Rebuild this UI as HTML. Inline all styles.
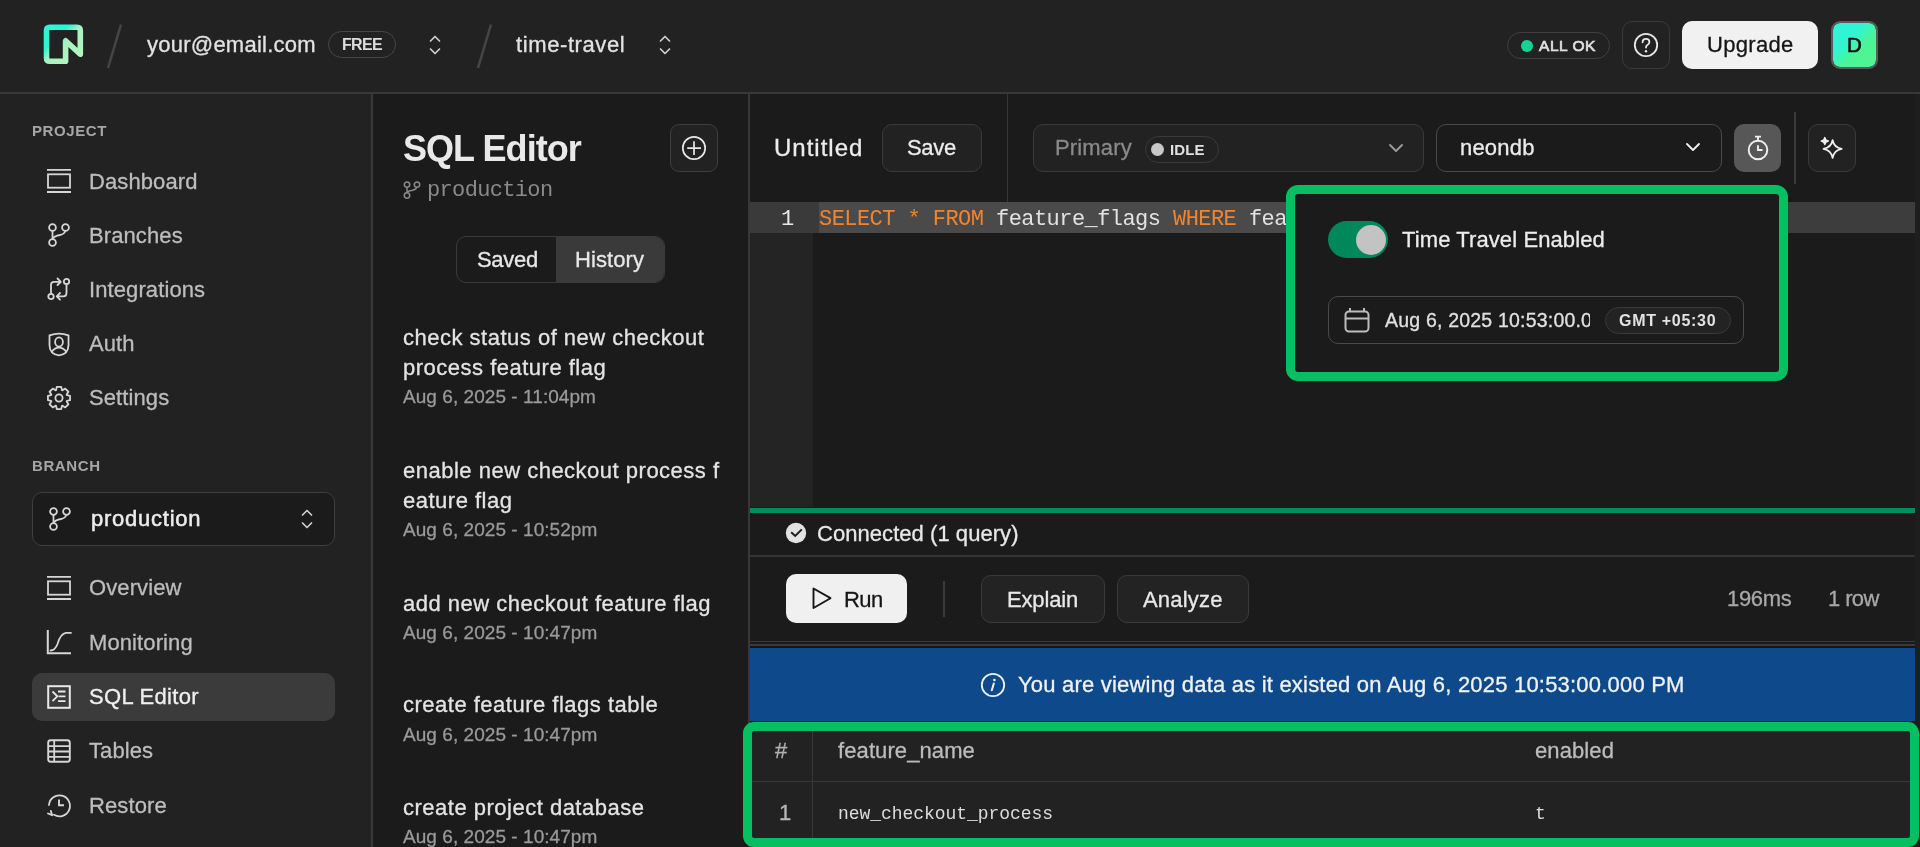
<!DOCTYPE html>
<html><head><meta charset="utf-8"><title>SQL Editor</title>
<style>
html,body{margin:0;padding:0;-webkit-font-smoothing:antialiased;width:1920px;height:847px;overflow:hidden;background:#1b1b1b;}
.t{position:absolute;white-space:pre;will-change:transform;font-family:'Liberation Sans', sans-serif;}
.b{position:absolute;}
svg.b{overflow:visible}
</style></head><body>
<div class="b" style="left:0px;top:0px;width:1920px;height:847px;background:#1b1b1b;border-radius:0px;"></div>
<div class="b" style="left:0px;top:0px;width:1920px;height:92px;background:#222222;border-radius:0px;"></div>
<div class="b" style="left:0px;top:92px;width:1920px;height:2px;background:#383838;border-radius:0px;"></div>
<div class="b" style="left:0px;top:94px;width:371px;height:753px;background:#222222;border-radius:0px;"></div>
<div class="b" style="left:371px;top:94px;width:2px;height:753px;background:#383838;border-radius:0px;"></div>
<div class="b" style="left:748px;top:94px;width:2px;height:753px;background:#383838;border-radius:0px;"></div>
<svg class="b" style="left:40px;top:20px;" width="48" height="48" viewBox="0 0 48 48" fill="none"><defs><linearGradient id="lg" gradientUnits="userSpaceOnUse" x1="4" y1="4" x2="43" y2="44"><stop offset="0" stop-color="#2cf5d8"/><stop offset="0.33" stop-color="#30f3d2"/><stop offset="0.5" stop-color="#a6f4c2"/><stop offset="1" stop-color="#b6f6bd"/></linearGradient></defs>
<path d="M25.6 41.3 H9.8 Q6.5 41.3 6.5 38 V10.5 Q6.5 7.2 9.8 7.2 H37 Q40.3 7.2 40.3 10.5 V34.3 L25.6 20.8 V41.3 Z" stroke="url(#lg)" stroke-width="5.6" stroke-linejoin="round" stroke-linecap="round"/></svg>
<svg class="b" style="left:100px;top:20px;" width="30" height="52" viewBox="0 0 30 52" fill="none"><line x1="21" y1="4.5" x2="8" y2="48" stroke="#454545" stroke-width="2.6"/></svg>
<div class="t" style="left:147px;top:33.87px;font-size:22px;line-height:22px;color:#e2e2e2;font-weight:normal;font-family:'Liberation Sans', sans-serif;letter-spacing:0.25px;-webkit-text-stroke:0.3px #e2e2e2;">your@email.com</div>
<div class="b" style="left:328px;top:31px;width:68px;height:27px;background:transparent;border:1.5px solid #474747;box-sizing:border-box;border-radius:14px;"></div>
<div class="t" style="left:342px;top:37.45px;font-size:16px;line-height:16px;color:#dddddd;font-weight:bold;font-family:'Liberation Sans', sans-serif;letter-spacing:-0.7px;">FREE</div>
<svg class="b" style="left:428px;top:34px;" width="14" height="22" viewBox="0 0 14 22" fill="none"><path d="M2.5 7 L7 2.5 L11.5 7 M2.5 15 L7 19.5 L11.5 15" stroke="#cfcfcf" stroke-width="1.7" stroke-linecap="round" stroke-linejoin="round"/></svg>
<svg class="b" style="left:470px;top:20px;" width="30" height="52" viewBox="0 0 30 52" fill="none"><line x1="21" y1="4.5" x2="8" y2="48" stroke="#454545" stroke-width="2.6"/></svg>
<div class="t" style="left:515.5px;top:33.87px;font-size:22px;line-height:22px;color:#e2e2e2;font-weight:normal;font-family:'Liberation Sans', sans-serif;letter-spacing:0.6px;-webkit-text-stroke:0.3px #e2e2e2;">time-travel</div>
<svg class="b" style="left:658px;top:34px;" width="14" height="22" viewBox="0 0 14 22" fill="none"><path d="M2.5 7 L7 2.5 L11.5 7 M2.5 15 L7 19.5 L11.5 15" stroke="#cfcfcf" stroke-width="1.7" stroke-linecap="round" stroke-linejoin="round"/></svg>
<div class="b" style="left:1507px;top:32px;width:103px;height:27px;background:#222;border:1.8px solid #404040;box-sizing:border-box;border-radius:14px;"></div>
<div class="b" style="left:1520.5px;top:39.5px;width:12.5px;height:12.5px;background:#12d394;border-radius:7px;"></div>
<div class="t" style="left:1539px;top:37.58px;font-size:15.5px;line-height:15.5px;color:#e0e0e0;font-weight:normal;font-family:'Liberation Sans', sans-serif;letter-spacing:0.55px;-webkit-text-stroke:0.7px #e0e0e0;">ALL OK</div>
<div class="b" style="left:1622px;top:20.5px;width:48px;height:48.0px;background:#222;border:1.5px solid #3a3a3a;box-sizing:border-box;border-radius:10px;"></div>
<svg class="b" style="left:1632px;top:30.5px;" width="28" height="28" viewBox="0 0 28 28" fill="none"><circle cx="14" cy="14" r="11.2" stroke="#e8e8e8" stroke-width="1.8"/><path d="M10.6 11.3 Q10.6 7.8 14 7.8 Q17.4 7.8 17.4 11 Q17.4 13 15.4 14 Q14 14.7 14 16.5" stroke="#e8e8e8" stroke-width="1.8" stroke-linecap="round" fill="none"/><circle cx="14" cy="20.3" r="1.2" fill="#e8e8e8"/></svg>
<div class="b" style="left:1682px;top:20.5px;width:136px;height:48.0px;background:#f1f1f1;border-radius:10px;"></div>
<div class="t" style="left:1707px;top:33.87px;font-size:22px;line-height:22px;color:#151515;font-weight:normal;font-family:'Liberation Sans', sans-serif;letter-spacing:0.3px;-webkit-text-stroke:0.3px #151515;">Upgrade</div>
<div class="b" style="left:1831px;top:21px;width:47px;height:47.5px;background:linear-gradient(135deg,#2ef5d8 0%,#31f5d0 38%,#4cf595 62%,#4ff590 100%);border:2px solid #5e5a5a;box-sizing:border-box;border-radius:9px;background-clip:padding-box;"></div>
<div class="t" style="left:1847.2px;top:35.44px;font-size:20.5px;line-height:20.5px;color:#111111;font-weight:normal;font-family:'Liberation Sans', sans-serif;letter-spacing:0px;-webkit-text-stroke:0.6px #111111;">D</div>
<div class="t" style="left:32px;top:123.00px;font-size:15px;line-height:15px;color:#a6a6a6;font-weight:bold;font-family:'Liberation Sans', sans-serif;letter-spacing:0.6px;">PROJECT</div>
<div class="t" style="left:32px;top:458.40px;font-size:15px;line-height:15px;color:#a6a6a6;font-weight:bold;font-family:'Liberation Sans', sans-serif;letter-spacing:0.6px;">BRANCH</div>
<svg class="b" style="left:46px;top:168px;" width="26" height="26" viewBox="0 0 26 26" fill="none"><path d="M1 1.9 H25 M1 24 H25" stroke="#d6d6d6" stroke-width="1.8"/><rect x="2" y="6.3" width="22" height="13.4" stroke="#d6d6d6" stroke-width="1.8"/></svg>
<div class="t" style="left:89px;top:170.87px;font-size:22px;line-height:22px;color:#bdbdbd;font-weight:normal;font-family:'Liberation Sans', sans-serif;letter-spacing:0.1px;-webkit-text-stroke:0.3px #bdbdbd;">Dashboard</div>
<svg class="b" style="left:46px;top:222px;" width="26" height="26" viewBox="0 0 26 26" fill="none"><g transform="scale(1.0)"><circle cx="6.5" cy="5.5" r="3.4" stroke="#d6d6d6" stroke-width="1.8"/><circle cx="19.5" cy="5.5" r="3.4" stroke="#d6d6d6" stroke-width="1.8"/><circle cx="6.5" cy="20.5" r="3.4" stroke="#d6d6d6" stroke-width="1.8"/><path d="M6.5 8.9 V17.1 M19.3 8.9 Q18.5 12 14 13 Q8 14 6.5 17" stroke="#d6d6d6" stroke-width="1.8" fill="none"/></g></svg>
<div class="t" style="left:89px;top:224.87px;font-size:22px;line-height:22px;color:#bdbdbd;font-weight:normal;font-family:'Liberation Sans', sans-serif;letter-spacing:0.1px;-webkit-text-stroke:0.3px #bdbdbd;">Branches</div>
<svg class="b" style="left:46px;top:276px;" width="26" height="26" viewBox="0 0 26 26" fill="none"><circle cx="5" cy="20.5" r="2.7" stroke="#d6d6d6" stroke-width="1.8"/><circle cx="20.5" cy="5.5" r="2.7" stroke="#d6d6d6" stroke-width="1.8"/><path d="M5 17.8 V9 Q5 5.8 8 5.8 H14.5 M11.5 2.5 L14.8 5.8 L11.5 9" stroke="#d6d6d6" stroke-width="1.8" fill="none" stroke-linecap="round" stroke-linejoin="round"/><path d="M20.5 8.2 V17 Q20.5 20.3 17.5 20.3 H11 M14 17 L10.7 20.3 L14 23.6" stroke="#d6d6d6" stroke-width="1.8" fill="none" stroke-linecap="round" stroke-linejoin="round"/></svg>
<div class="t" style="left:89px;top:278.87px;font-size:22px;line-height:22px;color:#bdbdbd;font-weight:normal;font-family:'Liberation Sans', sans-serif;letter-spacing:0.1px;-webkit-text-stroke:0.3px #bdbdbd;">Integrations</div>
<svg class="b" style="left:46px;top:330.5px;" width="26" height="26" viewBox="0 0 26 26" fill="none"><path d="M3.5 4.3 Q13 1 22.5 4.3 V14 Q22.5 23.3 13 24.3 Q3.5 23.3 3.5 14 Z" stroke="#d6d6d6" stroke-width="1.8" stroke-linejoin="round"/><ellipse cx="13" cy="11" rx="3.9" ry="4.6" stroke="#d6d6d6" stroke-width="1.8"/><path d="M5.8 20.6 Q8.8 16.6 13 16.6 Q17.2 16.6 20.2 20.6" stroke="#d6d6d6" stroke-width="1.8" fill="none"/></svg>
<div class="t" style="left:89px;top:333.37px;font-size:22px;line-height:22px;color:#bdbdbd;font-weight:normal;font-family:'Liberation Sans', sans-serif;letter-spacing:0.1px;-webkit-text-stroke:0.3px #bdbdbd;">Auth</div>
<svg class="b" style="left:46px;top:384.5px;" width="26" height="26" viewBox="0 0 26 26" fill="none"><path d="M24.07 10.76 L24.07 15.24 L20.86 15.96 L20.65 16.47 L22.42 19.24 L19.24 22.42 L16.47 20.65 L15.96 20.86 L15.24 24.07 L10.76 24.07 L10.04 20.86 L9.53 20.65 L6.76 22.42 L3.58 19.24 L5.35 16.47 L5.14 15.96 L1.93 15.24 L1.93 10.76 L5.14 10.04 L5.35 9.53 L3.58 6.76 L6.76 3.58 L9.53 5.35 L10.04 5.14 L10.76 1.93 L15.24 1.93 L15.96 5.14 L16.47 5.35 L19.24 3.58 L22.42 6.76 L20.65 9.53 L20.86 10.04 Z" stroke="#d6d6d6" stroke-width="1.8" stroke-linejoin="round"/><circle cx="13" cy="13" r="3.6" stroke="#d6d6d6" stroke-width="1.8"/></svg>
<div class="t" style="left:89px;top:387.37px;font-size:22px;line-height:22px;color:#bdbdbd;font-weight:normal;font-family:'Liberation Sans', sans-serif;letter-spacing:0.1px;-webkit-text-stroke:0.3px #bdbdbd;">Settings</div>
<div class="b" style="left:32px;top:491.5px;width:303px;height:54.0px;background:#1b1b1b;border:1.5px solid #3e3e3e;box-sizing:border-box;border-radius:10px;"></div>
<svg class="b" style="left:47px;top:506px;" width="26" height="26" viewBox="0 0 26 26" fill="none"><g transform="scale(1.0)"><circle cx="6.5" cy="5.5" r="3.4" stroke="#d6d6d6" stroke-width="1.8"/><circle cx="19.5" cy="5.5" r="3.4" stroke="#d6d6d6" stroke-width="1.8"/><circle cx="6.5" cy="20.5" r="3.4" stroke="#d6d6d6" stroke-width="1.8"/><path d="M6.5 8.9 V17.1 M19.3 8.9 Q18.5 12 14 13 Q8 14 6.5 17" stroke="#d6d6d6" stroke-width="1.8" fill="none"/></g></svg>
<div class="t" style="left:91px;top:507.87px;font-size:22px;line-height:22px;color:#ececec;font-weight:normal;font-family:'Liberation Sans', sans-serif;letter-spacing:0.75px;-webkit-text-stroke:0.5px #ececec;">production</div>
<svg class="b" style="left:299.5px;top:508px;" width="14" height="22" viewBox="0 0 14 22" fill="none"><path d="M2.5 7 L7 2.5 L11.5 7 M2.5 15 L7 19.5 L11.5 15" stroke="#cfcfcf" stroke-width="1.7" stroke-linecap="round" stroke-linejoin="round"/></svg>
<div class="b" style="left:32px;top:672.5px;width:303px;height:48.5px;background:#3b3b3b;border-radius:10px;"></div>
<svg class="b" style="left:46px;top:574.5px;" width="26" height="26" viewBox="0 0 26 26" fill="none"><path d="M1 1.9 H25 M1 24 H25" stroke="#d6d6d6" stroke-width="1.8"/><rect x="2" y="6.3" width="22" height="13.4" stroke="#d6d6d6" stroke-width="1.8"/></svg>
<div class="t" style="left:89px;top:577.37px;font-size:22px;line-height:22px;color:#bdbdbd;font-weight:normal;font-family:'Liberation Sans', sans-serif;letter-spacing:0.1px;-webkit-text-stroke:0.3px #bdbdbd;">Overview</div>
<svg class="b" style="left:46px;top:629px;" width="26" height="26" viewBox="0 0 26 26" fill="none"><path d="M1.8 1 V24.3 H25" stroke="#d6d6d6" stroke-width="2" fill="none"/><path d="M4.5 21.5 Q9 21.5 11.5 15 Q14.5 4.5 20 3.8 H25" stroke="#d6d6d6" stroke-width="1.8" fill="none" stroke-linecap="round"/></svg>
<div class="t" style="left:89px;top:631.87px;font-size:22px;line-height:22px;color:#bdbdbd;font-weight:normal;font-family:'Liberation Sans', sans-serif;letter-spacing:0.1px;-webkit-text-stroke:0.3px #bdbdbd;">Monitoring</div>
<svg class="b" style="left:46px;top:683.5px;" width="26" height="26" viewBox="0 0 26 26" fill="none"><rect x="2.2" y="2.2" width="21.6" height="21.6" stroke="#e8e8e8" stroke-width="2"/><path d="M6.5 7.5 L11.3 12.3 L6.5 17.2" stroke="#e8e8e8" stroke-width="1.8" fill="none"/><path d="M12 7.5 H19.5 M12.5 12.3 H19.5 M12 17.2 H19.5" stroke="#e8e8e8" stroke-width="1.8"/></svg>
<div class="t" style="left:89px;top:686.37px;font-size:22px;line-height:22px;color:#f0f0f0;font-weight:normal;font-family:'Liberation Sans', sans-serif;letter-spacing:0.3px;-webkit-text-stroke:0.3px #f0f0f0;-webkit-text-stroke:0.3px #f0f0f0;">SQL Editor</div>
<svg class="b" style="left:46px;top:737.5px;" width="26" height="26" viewBox="0 0 26 26" fill="none"><rect x="2.2" y="2.2" width="21.6" height="21.6" rx="2.5" stroke="#d6d6d6" stroke-width="1.9"/><path d="M2.2 8.2 H23.8 M2.2 13.5 H23.8 M2.2 18.8 H23.8 M8.2 2.2 V23.8" stroke="#d6d6d6" stroke-width="1.8"/></svg>
<div class="t" style="left:89px;top:740.37px;font-size:22px;line-height:22px;color:#bdbdbd;font-weight:normal;font-family:'Liberation Sans', sans-serif;letter-spacing:0.1px;-webkit-text-stroke:0.3px #bdbdbd;">Tables</div>
<svg class="b" style="left:46px;top:792px;" width="26" height="26" viewBox="0 0 26 26" fill="none"><path d="M8 22.8 A10.5 10.5 0 1 0 3 13" stroke="#d6d6d6" stroke-width="1.8" fill="none" stroke-linecap="round"/><path d="M2 21.5 L6.2 23.2 L4.8 18.8" stroke="#d6d6d6" stroke-width="1.8" fill="none" stroke-linecap="round" stroke-linejoin="round"/><path d="M13 7.5 V13.3 H18" stroke="#d6d6d6" stroke-width="1.9" fill="none"/></svg>
<div class="t" style="left:89px;top:794.87px;font-size:22px;line-height:22px;color:#bdbdbd;font-weight:normal;font-family:'Liberation Sans', sans-serif;letter-spacing:0.1px;-webkit-text-stroke:0.3px #bdbdbd;">Restore</div>
<div class="t" style="left:403px;top:131.02px;font-size:36px;line-height:36px;color:#e9e9e9;font-weight:bold;font-family:'Liberation Sans', sans-serif;letter-spacing:-0.95px;">SQL Editor</div>
<div class="b" style="left:670px;top:124px;width:48px;height:48px;background:#222222;border:1.5px solid #3e3e3e;box-sizing:border-box;border-radius:9px;"></div>
<svg class="b" style="left:680px;top:134px;" width="28" height="28" viewBox="0 0 28 28" fill="none"><circle cx="14" cy="14" r="11.2" stroke="#e8e8e8" stroke-width="1.7"/><path d="M14 7.2 V21 M7.2 14.1 H21" stroke="#e8e8e8" stroke-width="1.7"/></svg>
<svg class="b" style="left:402px;top:180px;" width="22" height="22" viewBox="0 0 22 22" fill="none"><circle cx="5" cy="4.6" r="2.7" stroke="#8a8a8a" stroke-width="1.5"/><circle cx="15" cy="4.6" r="2.7" stroke="#8a8a8a" stroke-width="1.5"/><circle cx="5" cy="15.5" r="2.7" stroke="#8a8a8a" stroke-width="1.5"/><path d="M5 7.3 V12.8 M14.8 7.3 Q14 9.6 10.5 10.3 Q6 11 5 12.8" stroke="#8a8a8a" stroke-width="1.5" fill="none"/></svg>
<div class="t" style="left:426.5px;top:180.25px;font-size:22px;line-height:22px;color:#8a8a8a;font-weight:normal;font-family:'Liberation Mono', monospace;letter-spacing:-0.66px;">production</div>
<div class="b" style="left:456px;top:235.5px;width:209px;height:47.5px;background:#1b1b1b;border:1.5px solid #3a3a3a;box-sizing:border-box;border-radius:10px;"></div>
<div class="b" style="left:556px;top:236.5px;width:108px;height:45.5px;background:#3a3a3a;border-radius:0px;border-radius:0 9px 9px 0;"></div>
<div class="t" style="left:476.5px;top:248.87px;font-size:22px;line-height:22px;color:#e8e8e8;font-weight:normal;font-family:'Liberation Sans', sans-serif;letter-spacing:-0.3px;-webkit-text-stroke:0.3px #e8e8e8;">Saved</div>
<div class="t" style="left:574.5px;top:248.87px;font-size:22px;line-height:22px;color:#e8e8e8;font-weight:normal;font-family:'Liberation Sans', sans-serif;letter-spacing:0.1px;-webkit-text-stroke:0.3px #e8e8e8;">History</div>
<div class="t" style="left:403px;top:326.87px;font-size:22px;line-height:22px;color:#e4e4e4;font-weight:normal;font-family:'Liberation Sans', sans-serif;letter-spacing:0.5px;-webkit-text-stroke:0.3px #e4e4e4;">check status of new checkout</div>
<div class="t" style="left:403px;top:356.87px;font-size:22px;line-height:22px;color:#e4e4e4;font-weight:normal;font-family:'Liberation Sans', sans-serif;letter-spacing:0.5px;-webkit-text-stroke:0.3px #e4e4e4;">process feature flag</div>
<div class="t" style="left:403px;top:387.41px;font-size:19px;line-height:19px;color:#9a9a9a;font-weight:normal;font-family:'Liberation Sans', sans-serif;letter-spacing:0.05px;-webkit-text-stroke:0.3px #9a9a9a;">Aug 6, 2025 - 11:04pm</div>
<div class="t" style="left:403px;top:459.87px;font-size:22px;line-height:22px;color:#e4e4e4;font-weight:normal;font-family:'Liberation Sans', sans-serif;letter-spacing:0.5px;-webkit-text-stroke:0.3px #e4e4e4;">enable new checkout process f</div>
<div class="t" style="left:403px;top:489.87px;font-size:22px;line-height:22px;color:#e4e4e4;font-weight:normal;font-family:'Liberation Sans', sans-serif;letter-spacing:0.5px;-webkit-text-stroke:0.3px #e4e4e4;">eature flag</div>
<div class="t" style="left:403px;top:520.41px;font-size:19px;line-height:19px;color:#9a9a9a;font-weight:normal;font-family:'Liberation Sans', sans-serif;letter-spacing:0.05px;-webkit-text-stroke:0.3px #9a9a9a;">Aug 6, 2025 - 10:52pm</div>
<div class="t" style="left:403px;top:592.87px;font-size:22px;line-height:22px;color:#e4e4e4;font-weight:normal;font-family:'Liberation Sans', sans-serif;letter-spacing:0.5px;-webkit-text-stroke:0.3px #e4e4e4;">add new checkout feature flag</div>
<div class="t" style="left:403px;top:623.41px;font-size:19px;line-height:19px;color:#9a9a9a;font-weight:normal;font-family:'Liberation Sans', sans-serif;letter-spacing:0.05px;-webkit-text-stroke:0.3px #9a9a9a;">Aug 6, 2025 - 10:47pm</div>
<div class="t" style="left:403px;top:694.37px;font-size:22px;line-height:22px;color:#e4e4e4;font-weight:normal;font-family:'Liberation Sans', sans-serif;letter-spacing:0.5px;-webkit-text-stroke:0.3px #e4e4e4;">create feature flags table</div>
<div class="t" style="left:403px;top:724.91px;font-size:19px;line-height:19px;color:#9a9a9a;font-weight:normal;font-family:'Liberation Sans', sans-serif;letter-spacing:0.05px;-webkit-text-stroke:0.3px #9a9a9a;">Aug 6, 2025 - 10:47pm</div>
<div class="t" style="left:403px;top:796.87px;font-size:22px;line-height:22px;color:#e4e4e4;font-weight:normal;font-family:'Liberation Sans', sans-serif;letter-spacing:0.5px;-webkit-text-stroke:0.3px #e4e4e4;">create project database</div>
<div class="t" style="left:403px;top:827.41px;font-size:19px;line-height:19px;color:#9a9a9a;font-weight:normal;font-family:'Liberation Sans', sans-serif;letter-spacing:0.05px;-webkit-text-stroke:0.3px #9a9a9a;">Aug 6, 2025 - 10:47pm</div>
<div class="t" style="left:774px;top:135.78px;font-size:24px;line-height:24px;color:#ececec;font-weight:normal;font-family:'Liberation Sans', sans-serif;letter-spacing:1.0px;-webkit-text-stroke:0.3px #ececec;">Untitled</div>
<div class="b" style="left:882px;top:124px;width:100px;height:48px;background:#222222;border:1.5px solid #3a3a3a;box-sizing:border-box;border-radius:10px;"></div>
<div class="t" style="left:907.3px;top:137.37px;font-size:22px;line-height:22px;color:#ececec;font-weight:normal;font-family:'Liberation Sans', sans-serif;letter-spacing:-0.3px;-webkit-text-stroke:0.3px #ececec;">Save</div>
<div class="b" style="left:1006.5px;top:94px;width:1.5px;height:108px;background:#363636;border-radius:0px;"></div>
<div class="b" style="left:1032.5px;top:124px;width:391.5px;height:48px;background:#222222;border:1.5px solid #3a3a3a;box-sizing:border-box;border-radius:10px;"></div>
<div class="t" style="left:1055px;top:137.37px;font-size:22px;line-height:22px;color:#8a8a8a;font-weight:normal;font-family:'Liberation Sans', sans-serif;letter-spacing:0.15px;-webkit-text-stroke:0.3px #8a8a8a;">Primary</div>
<div class="b" style="left:1145px;top:136px;width:73.5px;height:27px;background:#222222;border:1.5px solid #3a3a3a;box-sizing:border-box;border-radius:14px;"></div>
<div class="b" style="left:1151px;top:143px;width:13px;height:13px;background:#c8c8c8;border-radius:7px;"></div>
<div class="t" style="left:1170px;top:142.10px;font-size:15px;line-height:15px;color:#e0e0e0;font-weight:bold;font-family:'Liberation Sans', sans-serif;letter-spacing:0.1px;">IDLE</div>
<svg class="b" style="left:1387px;top:141.5px;" width="18" height="12" viewBox="0 0 18 12" fill="none"><path d="M3 3 L9 9 L15 3" stroke="#9a9a9a" stroke-width="1.9" fill="none" stroke-linecap="round" stroke-linejoin="round"/></svg>
<div class="b" style="left:1436px;top:124px;width:285.5px;height:47.5px;background:#1b1b1b;border:1.5px solid #4a4a4a;box-sizing:border-box;border-radius:10px;"></div>
<div class="t" style="left:1459.5px;top:137.47px;font-size:22px;line-height:22px;color:#ececec;font-weight:normal;font-family:'Liberation Sans', sans-serif;letter-spacing:0.2px;-webkit-text-stroke:0.3px #ececec;">neondb</div>
<svg class="b" style="left:1683.5px;top:141px;" width="18" height="12" viewBox="0 0 18 12" fill="none"><path d="M3 3 L9 9 L15 3" stroke="#ececec" stroke-width="1.9" fill="none" stroke-linecap="round" stroke-linejoin="round"/></svg>
<div class="b" style="left:1734px;top:124px;width:47px;height:47.5px;background:#575757;border-radius:10px;"></div>
<svg class="b" style="left:1743px;top:133px;" width="30" height="30" viewBox="0 0 30 30" fill="none"><circle cx="15" cy="17" r="9.3" stroke="#f0f0f0" stroke-width="1.9"/><path d="M12 3.6 H18 M15 3.6 V7.7 M15 12.3 V17 H19.5" stroke="#f0f0f0" stroke-width="1.9" fill="none"/></svg>
<div class="b" style="left:1794px;top:112px;width:1.5px;height:72px;background:#3a3a3a;border-radius:0px;"></div>
<div class="b" style="left:1807.5px;top:124px;width:48.0px;height:47.5px;background:#222222;border:1.5px solid #3a3a3a;box-sizing:border-box;border-radius:10px;"></div>
<svg class="b" style="left:1816px;top:132px;" width="32" height="32" viewBox="0 0 32 32" fill="none"><path d="M16.6 8 Q17.9 15.5 25.7 16.8 Q17.9 18.1 16.6 26 Q15.3 18.1 7.5 16.8 Q15.3 15.5 16.6 8 Z" stroke="#f0f0f0" stroke-width="1.7" stroke-linejoin="round"/><path d="M8.8 5.5 Q9.2 8.6 12.3 9 Q9.2 9.4 8.8 12.5 Q8.4 9.4 5.3 9 Q8.4 8.6 8.8 5.5 Z" stroke="#f0f0f0" stroke-width="1.5" fill="#f0f0f0" stroke-linejoin="round"/></svg>
<div class="b" style="left:750px;top:202px;width:63px;height:305px;background:#242424;border-radius:0px;"></div>
<div class="b" style="left:750px;top:202px;width:69px;height:30.5px;background:#3a3a3a;border-radius:0px;"></div>
<div class="b" style="left:819px;top:202px;width:467px;height:30.5px;background:#4a4a4a;border-radius:0px;"></div>
<div class="b" style="left:1788px;top:202px;width:127px;height:30.5px;background:#3d3d3d;border-radius:0px;"></div>
<div class="t" style="left:781px;top:209.15px;font-size:22px;line-height:22px;color:#e8e8e8;font-weight:normal;font-family:'Liberation Mono', monospace;letter-spacing:-0.4px;">1</div>
<div class="t" style="left:819.3px;top:209.15px;font-size:22px;line-height:22px;color:#e2e2e2;font-weight:normal;font-family:'Liberation Mono', monospace;letter-spacing:-0.56px;"><span style="color:#f0842f">SELECT</span> <span style="color:#f0842f">*</span> <span style="color:#f0842f">FROM</span> feature_flags <span style="color:#f0842f">WHERE</span> feature_name = 'new_checkout_process';</div>
<div class="b" style="left:750px;top:508px;width:1165px;height:5px;background:#008f5c;border-radius:0px;"></div>
<svg class="b" style="left:784px;top:521px;" width="24" height="24" viewBox="0 0 24 24" fill="none"><circle cx="12" cy="12" r="10.2" fill="#e2e2e2"/><path d="M7.2 11.2 L11.2 15 L17.8 8.3" stroke="#1b1b1b" stroke-width="1.9" fill="none"/></svg>
<div class="t" style="left:817px;top:522.87px;font-size:22px;line-height:22px;color:#e8e8e8;font-weight:normal;font-family:'Liberation Sans', sans-serif;letter-spacing:0.05px;-webkit-text-stroke:0.3px #e8e8e8;">Connected (1 query)</div>
<div class="b" style="left:750px;top:555px;width:1165px;height:1.5px;background:#343434;border-radius:0px;"></div>
<div class="b" style="left:786px;top:574px;width:121px;height:48.5px;background:#f0f0f0;border-radius:10px;"></div>
<svg class="b" style="left:808px;top:584px;" width="28" height="28" viewBox="0 0 28 28" fill="none"><path d="M5.5 4.5 V24 L22.5 14.2 Z" stroke="#161616" stroke-width="1.9" stroke-linejoin="round" fill="none"/></svg>
<div class="t" style="left:843.5px;top:588.87px;font-size:22px;line-height:22px;color:#161616;font-weight:normal;font-family:'Liberation Sans', sans-serif;letter-spacing:-0.6px;-webkit-text-stroke:0.3px #161616;">Run</div>
<div class="b" style="left:943px;top:581px;width:1.5px;height:36px;background:#3a3a3a;border-radius:0px;"></div>
<div class="b" style="left:981px;top:575px;width:124px;height:47.5px;background:#232323;border:1.5px solid #3a3a3a;box-sizing:border-box;border-radius:10px;"></div>
<div class="t" style="left:1007px;top:588.87px;font-size:22px;line-height:22px;color:#e8e8e8;font-weight:normal;font-family:'Liberation Sans', sans-serif;letter-spacing:-0.15px;-webkit-text-stroke:0.3px #e8e8e8;">Explain</div>
<div class="b" style="left:1117px;top:575px;width:132px;height:47.5px;background:#232323;border:1.5px solid #3a3a3a;box-sizing:border-box;border-radius:10px;"></div>
<div class="t" style="left:1143px;top:588.87px;font-size:22px;line-height:22px;color:#e8e8e8;font-weight:normal;font-family:'Liberation Sans', sans-serif;letter-spacing:0.2px;-webkit-text-stroke:0.3px #e8e8e8;">Analyze</div>
<div class="t" style="left:1726.5px;top:587.87px;font-size:22px;line-height:22px;color:#a8a8a8;font-weight:normal;font-family:'Liberation Sans', sans-serif;letter-spacing:-0.3px;-webkit-text-stroke:0.3px #a8a8a8;">196ms</div>
<div class="t" style="left:1828px;top:587.87px;font-size:22px;line-height:22px;color:#a8a8a8;font-weight:normal;font-family:'Liberation Sans', sans-serif;letter-spacing:-0.6px;-webkit-text-stroke:0.3px #a8a8a8;">1 row</div>
<div class="b" style="left:750px;top:640.5px;width:1165px;height:1.5px;background:#3a3a3a;border-radius:0px;"></div>
<div class="b" style="left:750px;top:642px;width:1165px;height:2px;background:#1a1a1a;border-radius:0px;"></div>
<div class="b" style="left:750px;top:644px;width:1165px;height:1.5px;background:#3a3a3a;border-radius:0px;"></div>
<div class="b" style="left:750px;top:645.5px;width:1165px;height:2.5px;background:#151515;border-radius:0px;"></div>
<div class="b" style="left:1915px;top:94px;width:5px;height:753px;background:#1e1e1e;border-radius:0px;"></div>
<div class="b" style="left:750px;top:648px;width:1165px;height:72.5px;background:#0e4a8b;border-radius:0px;"></div>
<svg class="b" style="left:980px;top:672px;" width="26" height="26" viewBox="0 0 26 26" fill="none"><circle cx="13" cy="13" r="11.2" stroke="#eef2f8" stroke-width="1.8"/><path d="M13.8 11.5 L11.8 18.3" stroke="#eef2f8" stroke-width="2" stroke-linecap="round"/><circle cx="14.4" cy="8" r="1.3" fill="#eef2f8"/></svg>
<div class="t" style="left:1017.5px;top:673.87px;font-size:22px;line-height:22px;color:#f2f2f2;font-weight:normal;font-family:'Liberation Sans', sans-serif;letter-spacing:0.2px;-webkit-text-stroke:0.3px #f2f2f2;">You are viewing data as it existed on Aug 6, 2025 10:53:00.000 PM</div>
<div class="b" style="left:750px;top:722px;width:1165px;height:125px;background:#222222;border-radius:0px;"></div>
<div class="b" style="left:811.5px;top:722px;width:1.5px;height:125px;background:#383838;border-radius:0px;"></div>
<div class="b" style="left:750px;top:780.5px;width:1165px;height:1.5px;background:#383838;border-radius:0px;"></div>
<div class="t" style="left:774.5px;top:740.37px;font-size:22px;line-height:22px;color:#b0b0b0;font-weight:normal;font-family:'Liberation Sans', sans-serif;letter-spacing:0px;-webkit-text-stroke:0.3px #b0b0b0;">#</div>
<div class="t" style="left:837.5px;top:740.37px;font-size:22px;line-height:22px;color:#bcbcbc;font-weight:normal;font-family:'Liberation Sans', sans-serif;letter-spacing:0.1px;-webkit-text-stroke:0.3px #bcbcbc;">feature_name</div>
<div class="t" style="left:1534.5px;top:740.37px;font-size:22px;line-height:22px;color:#bcbcbc;font-weight:normal;font-family:'Liberation Sans', sans-serif;letter-spacing:0.1px;-webkit-text-stroke:0.3px #bcbcbc;">enabled</div>
<div class="t" style="left:779px;top:801.87px;font-size:22px;line-height:22px;color:#b8b8b8;font-weight:normal;font-family:'Liberation Sans', sans-serif;letter-spacing:0px;-webkit-text-stroke:0.3px #b8b8b8;">1</div>
<div class="t" style="left:838px;top:805.31px;font-size:18px;line-height:18px;color:#dcdcdc;font-weight:normal;font-family:'Liberation Mono', monospace;letter-spacing:-0.05px;">new_checkout_process</div>
<div class="t" style="left:1534.5px;top:805.31px;font-size:18px;line-height:18px;color:#dcdcdc;font-weight:normal;font-family:'Liberation Mono', monospace;letter-spacing:0px;">t</div>
<div class="b" style="left:743px;top:722px;width:1176px;height:125px;background:transparent;border:9px solid #06bf62;box-sizing:border-box;border-radius:11px;"></div>
<div class="b" style="left:1286px;top:185px;width:502px;height:196px;background:#1b1b1b;border:9px solid #06bf62;box-sizing:border-box;border-radius:12px;"></div>
<div class="b" style="left:1328px;top:221px;width:60px;height:37px;background:#00875a;border-radius:19px;"></div>
<div class="b" style="left:1356px;top:224.5px;width:30px;height:30.0px;background:#c3c3c3;border-radius:15px;"></div>
<div class="t" style="left:1402px;top:229.37px;font-size:22px;line-height:22px;color:#ececec;font-weight:normal;font-family:'Liberation Sans', sans-serif;letter-spacing:0.1px;-webkit-text-stroke:0.3px #ececec;">Time Travel Enabled</div>
<div class="b" style="left:1328px;top:296px;width:416px;height:47.5px;background:#1b1b1b;border:1.5px solid #4a4a4a;box-sizing:border-box;border-radius:10px;"></div>
<svg class="b" style="left:1343px;top:306px;" width="28" height="28" viewBox="0 0 28 28" fill="none"><rect x="2.5" y="5.5" width="23" height="20" rx="3.5" stroke="#bdbdbd" stroke-width="2"/><path d="M2.5 12.6 H25.5 M7 2 V5.5 M21 2 V5.5" stroke="#bdbdbd" stroke-width="2"/></svg>
<div class="b" style="left:1385px;top:300px;width:205px;height:40px;overflow:hidden">
<div class="t" style="left:0px;top:10.69px;font-size:19.5px;line-height:19.5px;color:#e0e0e0;font-weight:normal;font-family:'Liberation Sans', sans-serif;letter-spacing:0.2px;-webkit-text-stroke:0.3px #e0e0e0;">Aug 6, 2025 10:53:00.000 PM</div>
</div>
<div class="b" style="left:1605px;top:307px;width:125.5px;height:27px;background:#232323;border:1.5px solid #3a3a3a;box-sizing:border-box;border-radius:14px;"></div>
<div class="t" style="left:1619px;top:313.45px;font-size:16px;line-height:16px;color:#e2e2e2;font-weight:bold;font-family:'Liberation Sans', sans-serif;letter-spacing:0.7px;">GMT +05:30</div>
</body></html>
